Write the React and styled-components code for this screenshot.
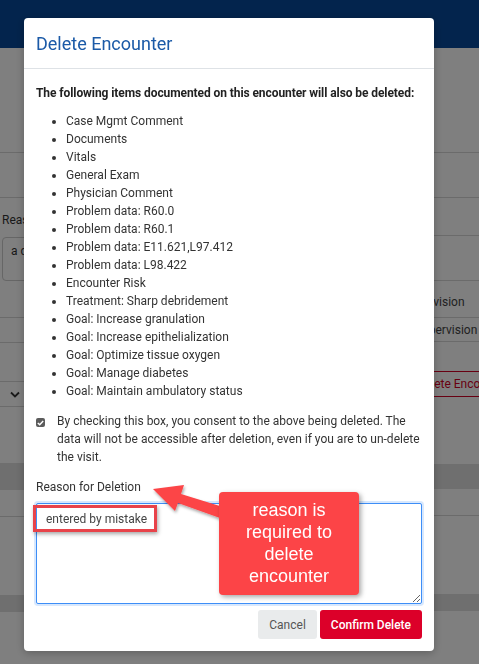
import React from 'react';
import styled, { createGlobalStyle } from 'styled-components';

const GlobalStyle = createGlobalStyle`
  html, body {
    margin: 0;
    padding: 0;
    height: 100%;
    overflow: hidden;
    font-family: Roboto, "Liberation Sans", Arial, sans-serif;
    color: #333;
  }
`;

/* ---------- background page (sits under the overlay) ---------- */

const Page = styled.div`
  height: 664px;
  background: #fff;
  display: flex;
  flex-direction: column;
`;

const TopBar = styled.div`
  height: 48px;
  flex: none;
  background: #07499a;
`;

const Columns = styled.div`
  display: grid;
  grid-template-columns: 240px 1fr;
  flex: 1;
`;

const Stack = styled.div`
  display: flex;
  flex-direction: column;
`;

const Row = styled.div`
  height: ${(p) => p.h}px;
  flex: none;
  box-sizing: border-box;
  border-bottom: ${(p) => (p.line ? '1px solid #d6d6d6' : 'none')};
  background: ${(p) => (p.band ? '#dedede' : 'transparent')};
  display: flex;
  align-items: center;
  padding-left: ${(p) => p.pad || 0}px;
  padding-top: ${(p) => p.top || 0}px;
  font-size: 12px;
  color: #444;
  white-space: nowrap;
`;

const FieldBlock = styled.div`
  height: 120px;
  flex: none;
  box-sizing: border-box;
  border-bottom: 1px solid #d6d6d6;
  padding: 15px 0 0 2px;
  font-size: 12px;
  color: #333;
`;

const FakeInput = styled.div`
  margin-top: 10px;
  width: 200px;
  height: 44px;
  box-sizing: border-box;
  border: 1px solid #ccc;
  border-radius: 4px;
  padding: 6px 8px;
`;

const OutlineButton = styled.div`
  height: 26px;
  box-sizing: border-box;
  border: 1px solid #d10024;
  color: #d10024;
  border-radius: 2px;
  padding: 0 8px;
  display: flex;
  align-items: center;
  white-space: nowrap;
  font-size: 12px;
`;

/* ---------- overlay + modal ---------- */

const Overlay = styled.div`
  position: fixed;
  inset: 0;
  background: rgba(0, 0, 0, 0.5);
`;

const Modal = styled.div`
  margin: 18px 0 0 24px;
  width: 410px;
  background: #fff;
  border-radius: 4px;
  box-shadow: 0 2px 8px rgba(0, 0, 0, 0.25);
`;

const ModalHeader = styled.div`
  height: 51px;
  box-sizing: border-box;
  border-bottom: 1px solid #dee2e6;
  display: flex;
  align-items: center;
  padding: 0 12px;
`;

const Title = styled.h2`
  margin: 0;
  font-size: 18px;
  font-weight: 400;
  color: #1b5aa7;
`;

const ModalBody = styled.div`
  padding: 15px 12px 12px;
  font-size: 12px;
  line-height: 18px;
  color: #333;
`;

const Lead = styled.p`
  margin: 0;
  font-weight: 700;
  letter-spacing: -0.08px;
  color: #222;
`;

const ItemList = styled.ul`
  margin: 10px 0 0;
  padding-left: 30px;
`;

const ConsentRow = styled.label`
  display: flex;
  gap: 12px;
  margin-top: 12px;
`;

const CheckBox = styled.span`
  flex: none;
  width: 9px;
  height: 9px;
  margin-top: 6px;
  border-radius: 2px;
  background: #5c5c5c;
  display: flex;
  align-items: center;
  justify-content: center;
`;

const FieldLabel = styled.div`
  margin-top: 12px;
  color: #333;
`;

const ReasonInput = styled.textarea`
  display: block;
  margin-top: 7px;
  width: 100%;
  height: 101px;
  box-sizing: border-box;
  border: 1px solid #3d8ef7;
  border-radius: 2px;
  box-shadow: 0 0 0 2px rgba(61, 142, 247, 0.2);
  padding: 6px 9px;
  font-family: Roboto, "Liberation Sans", Arial, sans-serif;
  font-size: 12px;
  line-height: 18px;
  color: #444;
  outline: none;
  resize: both;
`;

const Footer = styled.div`
  display: flex;
  justify-content: flex-end;
  gap: 3px;
  margin-top: 6px;
`;

const Button = styled.button`
  height: 29px;
  border: none;
  border-radius: 3px;
  padding: 0 11px;
  font-family: Roboto, "Liberation Sans", Arial, sans-serif;
  font-size: 12px;
  font-weight: ${(p) => (p.primary ? 500 : 400)};
  background: ${(p) => (p.primary ? '#dc0029' : '#e9ebec')};
  color: ${(p) => (p.primary ? '#fff' : '#555')};
`;

/* ---------- screenshot annotations ---------- */

const Highlight = styled.div`
  position: absolute;
  left: 33px;
  top: 505px;
  width: 124px;
  height: 27px;
  box-sizing: border-box;
  border: 3px solid #e8434a;
  box-shadow: 1px 2px 4px rgba(0, 0, 0, 0.35);
`;

const Callout = styled.div`
  position: absolute;
  left: 219px;
  top: 492px;
  width: 140px;
  height: 103px;
  box-sizing: border-box;
  padding-top: 7px;
  border-radius: 4px;
  background: #fc4447;
  box-shadow: 2px 2px 5px rgba(0, 0, 0, 0.35);
  color: #fff;
  font-family: "Liberation Sans", Arial, sans-serif;
  font-size: 18px;
  line-height: 22px;
  text-align: center;
`;

const ArrowLayer = styled.svg`
  position: absolute;
  left: 0;
  top: 0;
  pointer-events: none;
`;

const items = [
  'Case Mgmt Comment',
  'Documents',
  'Vitals',
  'General Exam',
  'Physician Comment',
  'Problem data: R60.0',
  'Problem data: R60.1',
  'Problem data: E11.621,L97.412',
  'Problem data: L98.422',
  'Encounter Risk',
  'Treatment: Sharp debridement',
  'Goal: Increase granulation',
  'Goal: Increase epithelialization',
  'Goal: Optimize tissue oxygen',
  'Goal: Manage diabetes',
  'Goal: Maintain ambulatory status',
];

const Chevron = () => (
  <svg width="10" height="7" viewBox="0 0 10 7" style={{ marginLeft: 10 }}>
    <path d="M1 1.5 L5 5.5 L9 1.5" fill="none" stroke="#333" strokeWidth="1.8" />
  </svg>
);

const BackgroundPage = () => (
  <Page>
    <TopBar />
    <Columns>
      <Stack>
        <Row h={105} line />
        <Row h={45} line />
        <FieldBlock>
          Reason
          <FakeInput>a d</FakeInput>
        </FieldBlock>
        <Row h={25} line />
        <Row h={39} line />
        <Row h={25} line>
          <Chevron />
        </Row>
        <Row h={56} />
        <Row h={27} band />
        <Row h={27} line />
        <Row h={78} />
        <Row h={17} band />
      </Stack>
      <Stack>
        <Row h={105} line />
        <Row h={45} line />
        <Row h={38} line />
        <Row h={45} line />
        <Row h={37} line pad={175} top={6}>Provision</Row>
        <Row h={24} line pad={175}>Supervision</Row>
        <Row h={29} />
        <Row h={26} pad={168}>
          <OutlineButton>Delete Encounter</OutlineButton>
        </Row>
        <Row h={67} />
        <Row h={25} band />
        <Row h={27} line />
        <Row h={78} />
        <Row h={17} band />
      </Stack>
    </Columns>
  </Page>
);

const Check = () => (
  <CheckBox>
    <svg width="7" height="6" viewBox="0 0 7 6">
      <path d="M0.8 3 L2.7 4.8 L6.2 1" fill="none" stroke="#fff" strokeWidth="1.4" />
    </svg>
  </CheckBox>
);

const Arrow = () => (
  <ArrowLayer width="479" height="664" viewBox="0 0 479 664">
    <defs>
      <filter id="arrowShadow" x="-20%" y="-20%" width="140%" height="140%">
        <feDropShadow dx="1" dy="2" stdDeviation="1.5" floodColor="#000" floodOpacity="0.35" />
      </filter>
    </defs>
    <polygon
      points="153,489 184,485 181,494 223,507 220,518 178,503 175,511"
      fill="#fc4447"
      filter="url(#arrowShadow)"
    />
  </ArrowLayer>
);

const App = () => (
  <>
    <GlobalStyle />
    <BackgroundPage />
    <Overlay>
      <Modal>
        <ModalHeader>
          <Title>Delete Encounter</Title>
        </ModalHeader>
        <ModalBody>
          <Lead>The following items documented on this encounter will also be deleted:</Lead>
          <ItemList>
            {items.map((item) => (
              <li key={item}>{item}</li>
            ))}
          </ItemList>
          <ConsentRow>
            <Check />
            <span>
              By checking this box, you consent to the above being deleted. The data will not be
              accessible after deletion, even if you are to un-delete the visit.
            </span>
          </ConsentRow>
          <FieldLabel>Reason for Deletion</FieldLabel>
          <ReasonInput defaultValue="entered by mistake" />
          <Footer>
            <Button>Cancel</Button>
            <Button primary>Confirm Delete</Button>
          </Footer>
        </ModalBody>
      </Modal>
      <Arrow />
      <Highlight />
      <Callout>
        reason is
        <br />
        required to
        <br />
        delete
        <br />
        encounter
      </Callout>
    </Overlay>
  </>
);

export default App;
